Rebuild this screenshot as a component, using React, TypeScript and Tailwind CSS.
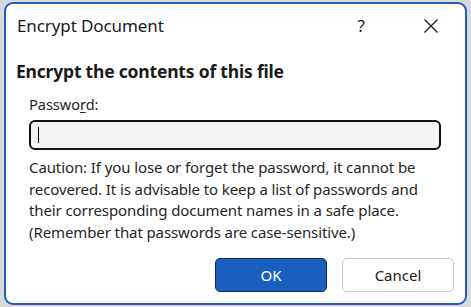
export default function App() {
  return (
    <div className="w-[471px] h-[307px] bg-[#d9d9d9] pl-[4px] pr-[4px] pt-[2px] pb-[2px] font-['Noto_Sans',sans-serif] text-[#1a1a1a]">
      <div className="w-full h-full bg-white border-2 border-[#1d5fbf] rounded-[9px] flex flex-col">
        {/* title bar */}
        <div className="h-[44px] flex items-center pl-[11px] pr-[26px]">
          <span className="text-[17px] tracking-[-0.1px]">Encrypt Document</span>
          <span className="ml-auto mr-[58px] text-[17px]">?</span>
          <svg width="16" height="16" viewBox="0 0 16 16" className="mb-[1px]">
            <path d="M1.5 1.5 L14.5 14.5 M14.5 1.5 L1.5 14.5" stroke="#1a1a1a" strokeWidth="1.3" fill="none" />
          </svg>
        </div>

        <div className="pl-[10px] pr-[10px] pt-[12px]">
          <h1 className="text-[17.5px] font-bold leading-[22px] tracking-[-0.2px]">Encrypt the contents of this file</h1>

          <div className="pl-[13px] pr-[14px] pt-[13px]">
            <label className="block text-[14.5px] leading-[18px] text-[#262626]">
              Passwo<span className="underline underline-offset-2">r</span>d:
            </label>
            <div className="mt-[7px] h-[30px] border-2 border-[#111] rounded-[6px] bg-[#f3f3f3] flex items-center pl-[7px]">
              <div className="w-[1px] h-[16px] bg-black" />
            </div>

            <p className="mt-[7px] text-[15px] leading-[21.7px] text-[#262626] tracking-[-0.1px] whitespace-nowrap">
              Caution: If you lose or forget the password, it cannot be
              <br />
              recovered. It is advisable to keep a list of passwords and
              <br />
              their corresponding document names in a safe place.
              <br />
              (Remember that passwords are case-sensitive.)
            </p>
          </div>

          <div className="flex justify-end gap-[15px] pr-[1px] mt-[14px]">
            <button className="w-[112px] h-[34px] rounded-[5px] bg-[#1a5fc0] border border-[#0b2a5a] text-white text-[15px]">
              OK
            </button>
            <button className="w-[112px] h-[34px] rounded-[5px] bg-white border border-[#c8c8c8] text-[#1a1a1a] text-[15px]">
              Cancel
            </button>
          </div>
        </div>
      </div>
    </div>
  );
}
